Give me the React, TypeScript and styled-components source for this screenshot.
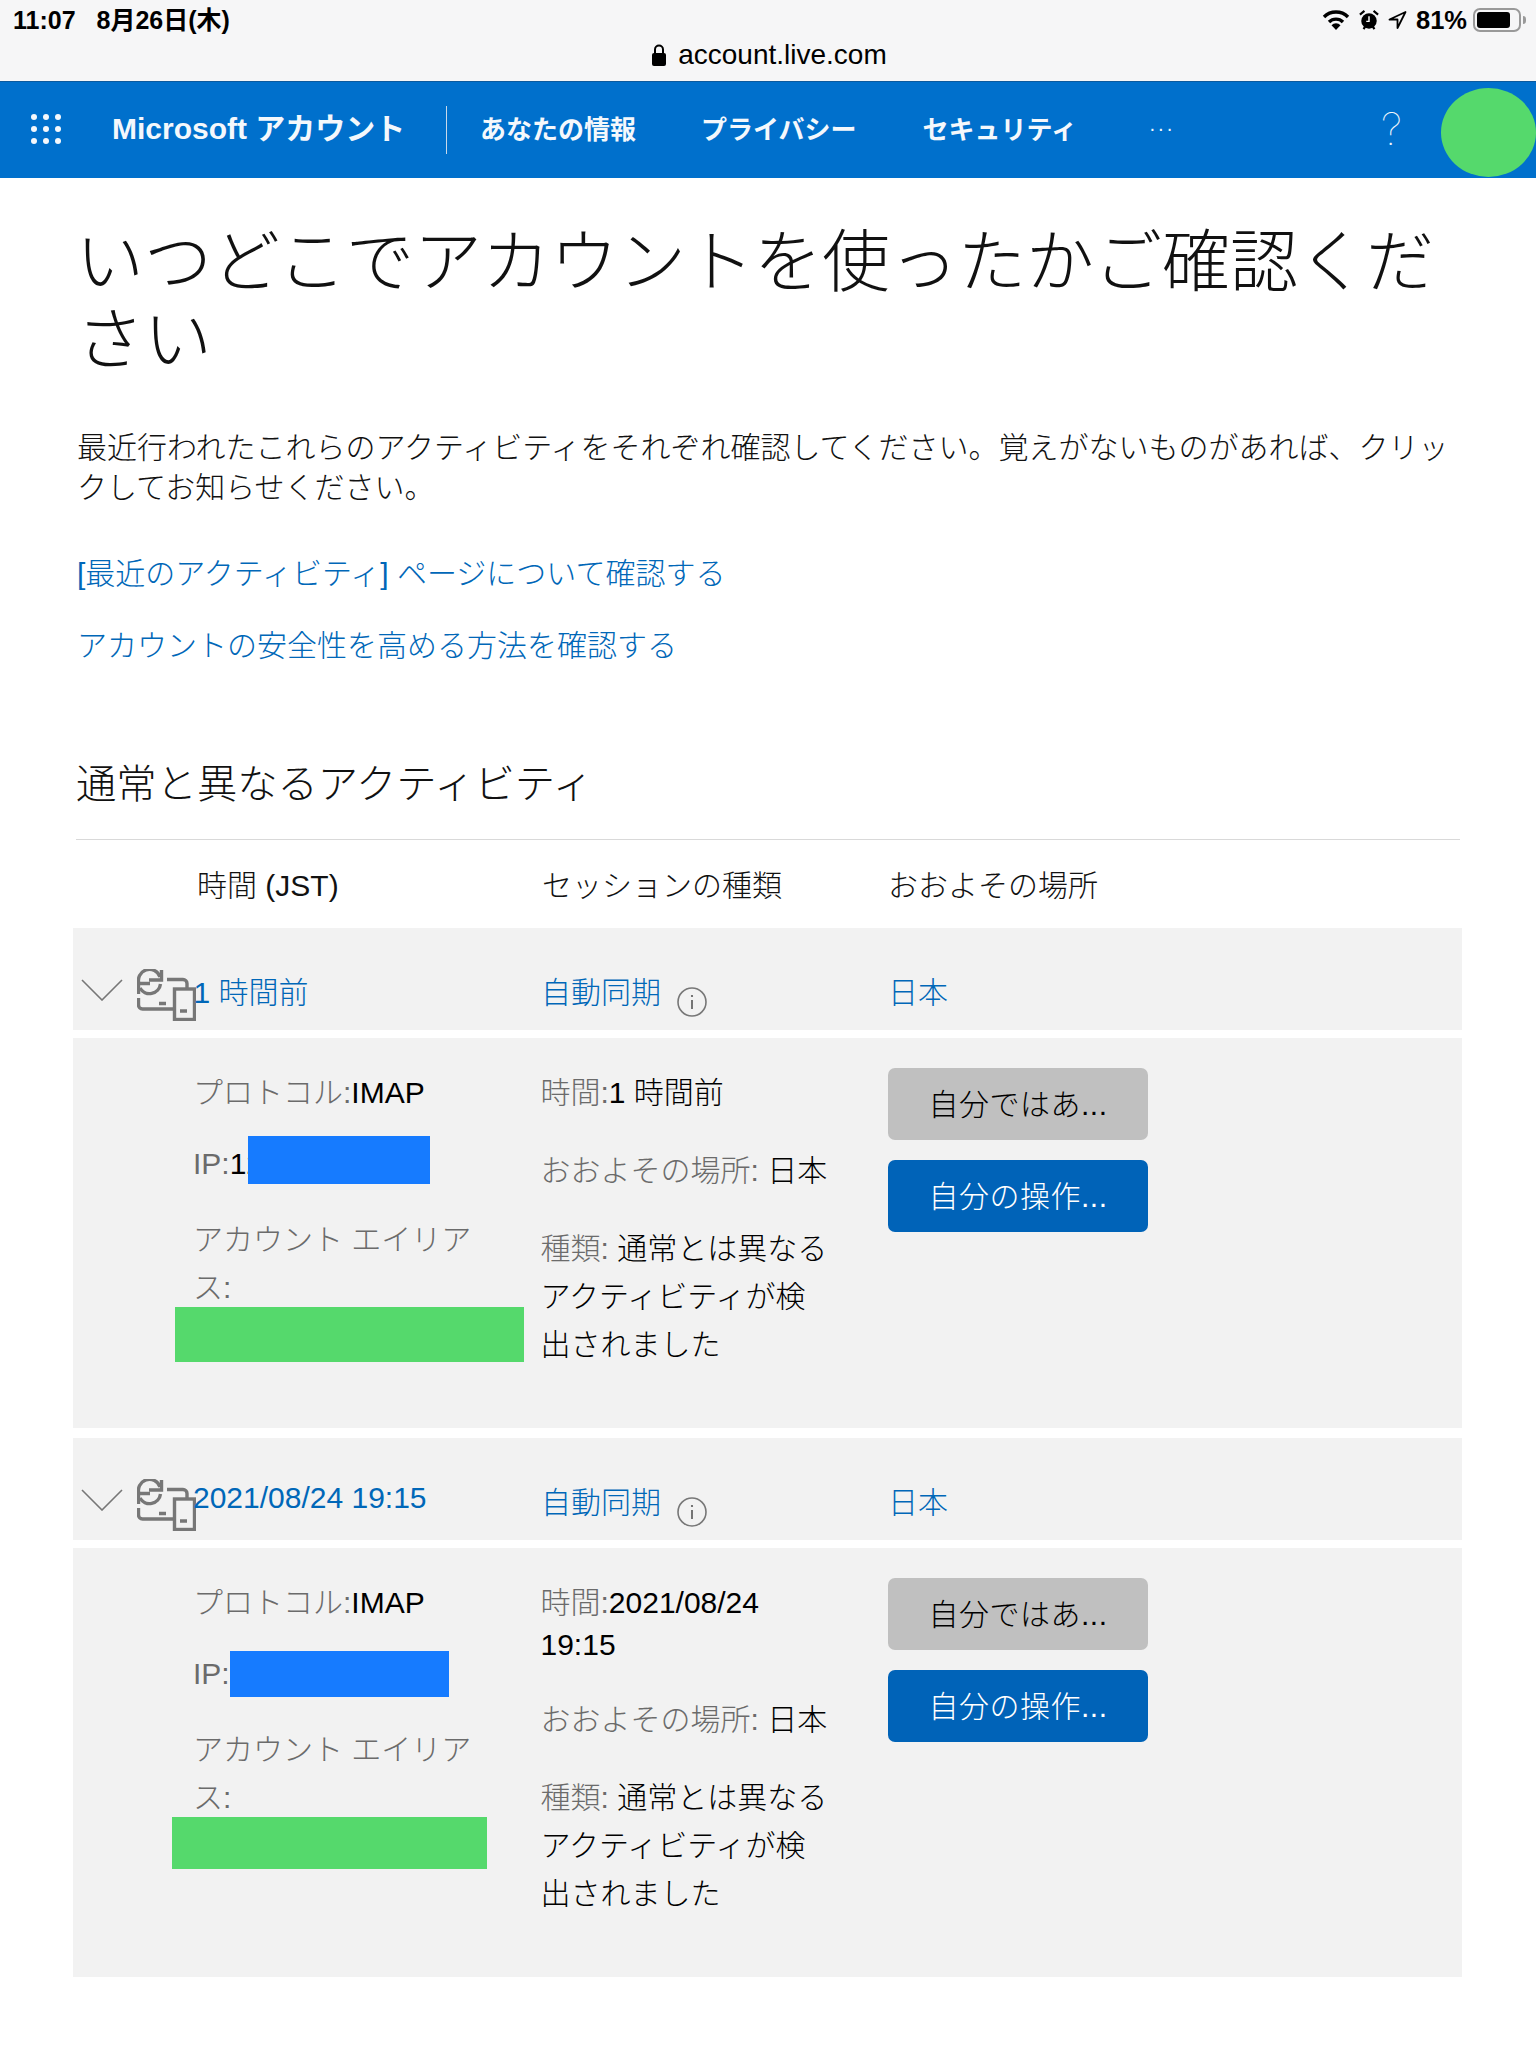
import React from 'react';
import styled, { createGlobalStyle } from 'styled-components';

const GlobalStyle = createGlobalStyle`
  html, body {
    margin: 0;
    background: #fff;
    font-family: "Liberation Sans", "Noto Sans CJK JP", sans-serif;
    font-weight: 300;
    color: #111;
  }
`;

const Page = styled.div`
  width: 1536px;
  height: 2048px;
  overflow: hidden;
  background: #fff;
`;

const StatusBar = styled.div`
  height: 81px;
  background: #f6f6f7;
  border-bottom: 1px solid #0b5a9e;
  position: relative;
  color: #000;
`;

const Clock = styled.div`
  display: flex;
  gap: 21px;
  padding: 6px 0 0 13px;
  font-size: 25px;
  line-height: 28px;
  font-weight: 700;
`;

const Address = styled.div`
  display: flex;
  justify-content: center;
  align-items: center;
  gap: 11px;
  margin-top: 5px;
  padding-left: 2px;
  font-size: 28px;
  line-height: 32px;
  font-weight: 400;
`;

const StatusIcons = styled.div`
  position: absolute;
  top: 6px;
  right: 15px;
  display: flex;
  align-items: center;
  gap: 9px;
  height: 28px;
  font-size: 25.5px;
  font-weight: 700;
`;

const Battery = styled.div`
  width: 48px;
  height: 24px;
  box-sizing: border-box;
  border: 2px solid #999;
  border-radius: 7px;
  padding: 2px;
  position: relative;
  margin-left: -3px;

  &::before {
    content: '';
    display: block;
    width: 82%;
    height: 100%;
    background: #000;
    border-radius: 3px;
  }

  &::after {
    content: '';
    position: absolute;
    right: -7px;
    top: 6px;
    width: 3px;
    height: 8px;
    border-radius: 0 3px 3px 0;
    background: #999;
  }
`;

const Nav = styled.nav`
  height: 96px;
  background: #0070cc;
  display: flex;
  align-items: center;
  color: #f4f8fc;
  position: relative;
  overflow: hidden;
`;

const Waffle = styled.div`
  display: grid;
  grid-template-columns: repeat(3, 6px);
  gap: 6px;
  margin-left: 31px;
  margin-top: -2px;

  span {
    width: 6px;
    height: 6px;
    border-radius: 50%;
    background: #f4f8fc;
  }
`;

const Brand = styled.div`
  margin-left: 51px;
  width: 334px;
  height: 48px;
  border-right: 1.5px solid #c8d9ea;
  font-size: 30px;
  line-height: 46px;
  font-weight: 700;
  white-space: nowrap;
`;

const NavLink = styled.div<{ $left: number }>`
  margin-left: ${(p) => p.$left}px;
  font-size: 26px;
  font-weight: 700;
  line-height: 40px;
  white-space: nowrap;
`;

const More = styled.div`
  margin-left: 72px;
  font-size: 20px;
  letter-spacing: 2px;
  margin-top: -4px;
`;

const Help = styled.div`
  margin-left: auto;
  margin-right: 134px;
  font-family: Inter, sans-serif;
  font-size: 44px;
  font-weight: 100;
  margin-top: -2px;
`;

const Avatar = styled.div`
  position: absolute;
  left: 1441px;
  top: 6px;
  width: 95px;
  height: 89px;
  border-radius: 50%;
  background: #55d96c;
`;

const Main = styled.main`
  padding: 0 74px 0 73px;
`;

const Title = styled.h1`
  margin: 45px 0 0 3px;
  width: 1400px;
  font-size: 68px;
  line-height: 78px;
  font-weight: 300;
`;

const Lead = styled.p`
  margin: 49px 0 0 4px;
  font-size: 30px;
  line-height: 40px;
  width: 1390px;
`;

const TextLink = styled.a<{ $gap: number }>`
  display: block;
  margin: ${(p) => p.$gap}px 0 0 4px;
  font-size: 30px;
  line-height: 40px;
  color: #0067b8;
`;

const Section = styled.h2`
  margin: 94px 0 0 3px;
  font-size: 40.3px;
  line-height: 50px;
  font-weight: 300;
`;

const Rule = styled.div`
  height: 1px;
  margin: 29px 2px 0 3px;
  background: #d9d9d9;
`;

const Columns = styled.div`
  display: grid;
  grid-template-columns: 122px 347px 346px 1fr;
`;

const HeadRow = styled(Columns)`
  height: 88px;
  padding-bottom: 3px;
  box-sizing: border-box;
  align-items: center;
  font-size: 30px;
`;

const HeadTime = styled.div`
  margin-left: 2px;
`;

const RowHead = styled(Columns)`
  height: 102px;
  background: #f2f2f2;
  margin-bottom: 8px;
  padding-top: 44px;
  box-sizing: border-box;
  line-height: 42px;
  font-size: 30px;
  color: #0067b8;
`;

const Toggle = styled.div`
  display: flex;
  align-items: flex-start;
`;

const ChevronSvg = styled.svg`
  margin: 7px 0 0 8px;
  flex: none;
`;

const DevicesSvg = styled.svg`
  margin: -3px 0 0 14px;
  flex: none;
`;

const InfoSvg = styled.svg`
  margin-top: 15px;
`;

const RowTime = styled.div<{ $raised?: boolean }>`
  margin-left: ${(p) => (p.$raised ? -2 : -1.5)}px;
  margin-top: ${(p) => (p.$raised ? -5 : 0)}px;
  white-space: nowrap;
`;

const SessionCell = styled.div`
  display: flex;
  align-items: flex-start;
  gap: 16px;
  margin-left: -1px;
`;

const Detail = styled(Columns)`
  background: #f2f2f2;
  padding: 31px 0 59px;
  margin-bottom: 10px;
  font-size: 30px;
  position: relative;
`;

const Stack = styled.div`
  position: relative;
`;

const LeftStack = styled(Stack)`
  margin-left: -2px;
`;

const MiddleStack = styled(Stack)`
  margin-left: -1.5px;
`;

const Field = styled.p<{ $tight?: boolean; $gap?: number }>`
  margin: ${(p) => (p.$tight ? 3 : 0)}px 0 ${(p) => p.$gap ?? 30}px;
  line-height: ${(p) => (p.$tight ? 42 : 48)}px;
  color: #000;
  width: 290px;
`;

const Label = styled.span`
  color: #6b6b6b;
`;

const Actions = styled.div`
  display: flex;
  flex-direction: column;
  gap: 20px;
  margin-top: -1px;
`;

const Button = styled.button<{ $primary?: boolean }>`
  width: 260px;
  height: 72px;
  border: 0;
  border-radius: 7px;
  padding: 0 0 5px;
  font: inherit;
  font-size: 30px;
  letter-spacing: 0.5px;
  background: ${(p) => (p.$primary ? '#0063b8' : '#c0c0c0')};
  color: ${(p) => (p.$primary ? '#fff' : '#000')};
`;

const Redaction = styled.div<{ $color: string; $x: number; $y: number; $w: number; $h: number }>`
  position: absolute;
  left: ${(p) => p.$x}px;
  top: ${(p) => p.$y}px;
  width: ${(p) => p.$w}px;
  height: ${(p) => p.$h}px;
  background: ${(p) => p.$color};
`;

function LockIcon () {
  return (
    <svg width='16' height='24' viewBox='0 0 16 24'>
      <path d='M4 10V6.5a4 4 0 0 1 8 0V10' fill='none' stroke='#000' strokeWidth='2' />
      <rect x='1' y='10' width='14' height='13' rx='2' fill='#000' />
    </svg>
  );
}

function WifiIcon () {
  return (
    <svg width='28' height='22' viewBox='0 0 28 22'>
      <path d='M2 8a17 17 0 0 1 24 0' fill='none' stroke='#000' strokeWidth='3.4' />
      <path d='M7 13a10 10 0 0 1 14 0' fill='none' stroke='#000' strokeWidth='3.4' />
      <path d='M14 21l-4.5-4.8a6 6 0 0 1 9 0z' fill='#000' />
    </svg>
  );
}

function AlarmIcon () {
  return (
    <svg width='20' height='22' viewBox='0 0 22 24'>
      <circle cx='11' cy='13' r='8.5' fill='#000' />
      <path d='M1 6l5-4M21 6l-5-4M5 22l2-3M17 22l-2-3' stroke='#000' strokeWidth='2.4' />
      <path d='M11 8v5.5H8' fill='none' stroke='#fff' strokeWidth='1.6' />
    </svg>
  );
}

function LocationIcon () {
  return (
    <svg width='19' height='20' viewBox='0 0 19 20'>
      <path d='M17.5 2L1.5 9.5h8V18z' fill='none' stroke='#000' strokeWidth='1.8' strokeLinejoin='round' />
    </svg>
  );
}

function Chevron () {
  return (
    <ChevronSvg width='42' height='22' viewBox='0 0 42 22'>
      <path d='M1 1l20 20L41 1' fill='none' stroke='#777' strokeWidth='1.6' />
    </ChevronSvg>
  );
}

function SyncDevices () {
  return (
    <DevicesSvg width='59' height='52' viewBox='0 0 59 52'>
      <g fill='none' stroke='#777' strokeWidth='3.4'>
        <path d='M2 15A11 11 0 0 1 23 8' />
        <path d='M24.5 1v10H12' />
        <path d='M23.5 15A11 11 0 0 1 3 19' />
        <path d='M1.5 25V14.5H13' />
        <path d='M30 10.5h16a4 4 0 0 1 4 4v5' />
        <path d='M1.5 29v7a4 4 0 0 0 4 4H36' />
        <rect x='37.5' y='20' width='20' height='30.5' />
        <path d='M22 34.5h7M43 42h7' />
      </g>
    </DevicesSvg>
  );
}

function InfoIcon () {
  return (
    <InfoSvg width='30' height='30' viewBox='0 0 30 30'>
      <circle cx='15' cy='15' r='14' fill='none' stroke='#777' strokeWidth='1.6' />
      <path d='M15 13v9' stroke='#555' strokeWidth='1.6' />
      <circle cx='15' cy='9' r='1.1' fill='#555' />
    </InfoSvg>
  );
}

interface ActivityProps {
  time: string;
  ipPrefix?: string;
  tight?: boolean;
  children: React.ReactNode;
}

function Activity ({ children, ipPrefix, tight, time }: ActivityProps) {
  return (
    <>
      <RowHead>
        <Toggle>
          <Chevron />
          <SyncDevices />
        </Toggle>
        <RowTime $raised={tight}>{time}</RowTime>
        <SessionCell>
          自動同期
          <InfoIcon />
        </SessionCell>
        <div>日本</div>
      </RowHead>
      <Detail>
        <div />
        <LeftStack>
          <Field $gap={23}><Label>プロトコル:</Label>IMAP</Field>
          <Field $gap={28}><Label>IP:</Label>{ipPrefix}</Field>
          <Field $gap={1}><Label>アカウント エイリアス:</Label></Field>
        </LeftStack>
        <MiddleStack>
          <Field $tight={tight}><Label>時間:</Label>{time}</Field>
          <Field><Label>おおよその場所:</Label> 日本</Field>
          <Field $gap={0}><Label>種類:</Label> 通常とは異なるアクティビティが検出されました</Field>
        </MiddleStack>
        <Actions>
          <Button>自分ではあ...</Button>
          <Button $primary>自分の操作...</Button>
        </Actions>
        {children}
      </Detail>
    </>
  );
}

export default function App () {
  return (
    <Page>
      <GlobalStyle />
      <StatusBar>
        <Clock><span>11:07</span><span>8月26日(木)</span></Clock>
        <Address><LockIcon />account.live.com</Address>
        <StatusIcons>
          <WifiIcon />
          <AlarmIcon />
          <LocationIcon />
          <span>81%</span>
          <Battery />
        </StatusIcons>
      </StatusBar>
      <Nav>
        <Waffle>
          {Array.from({ length: 9 }, (_, i) => <span key={i} />)}
        </Waffle>
        <Brand>Microsoft アカウント</Brand>
        <NavLink $left={33}>あなたの情報</NavLink>
        <NavLink $left={65}>プライバシー</NavLink>
        <NavLink $left={66}>セキュリティ</NavLink>
        <More>···</More>
        <Help>?</Help>
        <Avatar />
      </Nav>
      <Main>
        <Title>いつどこでアカウントを使ったかご確認ください</Title>
        <Lead>最近行われたこれらのアクティビティをそれぞれ確認してください。覚えがないものがあれば、クリックしてお知らせください。</Lead>
        <TextLink $gap={46}>[最近のアクティビティ] ページについて確認する</TextLink>
        <TextLink $gap={32}>アカウントの安全性を高める方法を確認する</TextLink>
        <Section>通常と異なるアクティビティ</Section>
        <Rule />
        <HeadRow>
          <div />
          <HeadTime>時間 (JST)</HeadTime>
          <div>セッションの種類</div>
          <div>おおよその場所</div>
        </HeadRow>
        <Activity ipPrefix='12' time='1 時間前'>
          <Redaction $color='#167bff' $h={48} $w={182} $x={175} $y={98} />
          <Redaction $color='#55d96c' $h={55} $w={349} $x={102} $y={269} />
        </Activity>
        <Activity tight time='2021/08/24 19:15'>
          <Redaction $color='#167bff' $h={46} $w={219} $x={157} $y={103} />
          <Redaction $color='#55d96c' $h={52} $w={315} $x={99} $y={269} />
        </Activity>
      </Main>
    </Page>
  );
}
